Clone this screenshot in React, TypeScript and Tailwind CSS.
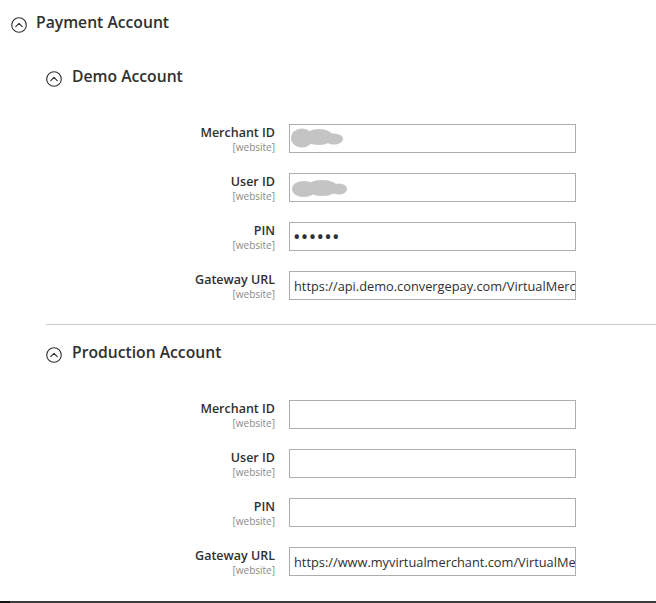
import React from "react";

const font = { fontFamily: '"Open Sans", "Liberation Sans", sans-serif' };

function CircleUp() {
  return (
    <svg width="16" height="16" viewBox="0 0 16 16" className="shrink-0">
      <circle cx="8" cy="8" r="7.3" fill="none" stroke="#303030" strokeWidth="1.1" />
      <path d="M4.8 9.6 L8 6.4 L11.2 9.6" fill="none" stroke="#303030" strokeWidth="1.2" strokeLinecap="round" strokeLinejoin="round" />
    </svg>
  );
}

function Blob({ variant }: { variant: 1 | 2 }) {
  return (
    <svg
      width="70"
      height="27"
      viewBox="0 0 70 27"
      className="absolute left-[1px] top-[1px] pointer-events-none"
    >
      <defs>
        <filter id={`b${variant}`} x="-20%" y="-40%" width="140%" height="180%">
          <feGaussianBlur stdDeviation="0.7" />
        </filter>
      </defs>
      {variant === 1 ? (
        <g fill="#c4c4c4" filter={`url(#b${variant})`}>
          <ellipse cx="12" cy="13" rx="11" ry="9.5" />
          <ellipse cx="29" cy="12" rx="14" ry="8" />
          <ellipse cx="44" cy="14" rx="9" ry="5.5" />
        </g>
      ) : (
        <g fill="#c4c4c4" filter={`url(#b${variant})`}>
          <ellipse cx="14" cy="15" rx="12" ry="8" />
          <ellipse cx="32" cy="14" rx="16" ry="8" />
          <ellipse cx="49" cy="15" rx="8" ry="5.5" />
        </g>
      )}
    </svg>
  );
}

type Field = {
  label: string;
  value?: string;
  password?: boolean;
  blob?: 1 | 2;
};

function FieldRow({ f }: { f: Field }) {
  return (
    <div className="flex items-start h-[29px]">
      <div className="w-[229px] text-right">
        <div className="text-[12.5px] leading-[17px] font-semibold text-[#303030]">{f.label}</div>
        <div className="text-[10px] leading-[13px] text-[#8a8a8a]">[website]</div>
      </div>
      <div className="relative ml-[14px] w-[287px] h-[29px]">
        <input
          readOnly
          type={f.password ? "password" : "text"}
          value={f.value ?? ""}
          style={font}
          className={
            f.password
              ? "w-full h-full border border-[#adadad] bg-white pl-[3px] pr-0 text-[20px] tracking-[0.3px] text-[#303030] outline-none"
              : "w-full h-full border border-[#adadad] bg-white pl-[4px] pr-0 text-[12.8px] text-[#303030] outline-none"
          }
        />
        {f.blob ? <Blob variant={f.blob} /> : null}
      </div>
    </div>
  );
}

function SubHeader({ title, gap }: { title: string; gap: string }) {
  return (
    <div className={`flex items-start h-[20px] ${gap}`}>
      <div className="mt-[5px]">
        <CircleUp />
      </div>
      <div className="text-[15.7px] leading-[20px] font-semibold text-[#303030]">{title}</div>
    </div>
  );
}

export default function App() {
  const demo: Field[] = [
    { label: "Merchant ID", blob: 1 },
    { label: "User ID", blob: 2 },
    { label: "PIN", value: "123456", password: true },
    { label: "Gateway URL", value: "https://api.demo.convergepay.com/VirtualMerchantDemo/processxml.do" },
  ];
  const prod: Field[] = [
    { label: "Merchant ID" },
    { label: "User ID" },
    { label: "PIN" },
    { label: "Gateway URL", value: "https://www.myvirtualmerchant.com/VirtualMerchant/processxml.do" },
  ];
  return (
    <div style={font} className="w-[656px] h-[603px] bg-white overflow-hidden flex flex-col">
      <div className="pl-[11px] pt-[12px]">
        <SubHeader title="Payment Account" gap="gap-[9px]" />
      </div>
      <div className="pl-[46px]">
        <div className="mt-[34px]">
          <SubHeader title="Demo Account" gap="gap-[10px]" />
        </div>
        <div className="mt-[38px] flex flex-col gap-[20px]">
          {demo.map((f) => (
            <FieldRow key={f.label} f={f} />
          ))}
        </div>
        <div className="mt-[24px] border-t border-[#cccccc]" />
        <div className="mt-[17px]">
          <SubHeader title="Production Account" gap="gap-[10px]" />
        </div>
        <div className="mt-[38px] flex flex-col gap-[20px]">
          {prod.map((f) => (
            <FieldRow key={f.label} f={f} />
          ))}
        </div>
      </div>
      <div className="mt-auto h-[2px] flex">
        <div className="w-[10px] bg-[#111111]" />
        <div className="flex-1 bg-[#3c3c3c]" />
      </div>
    </div>
  );
}
